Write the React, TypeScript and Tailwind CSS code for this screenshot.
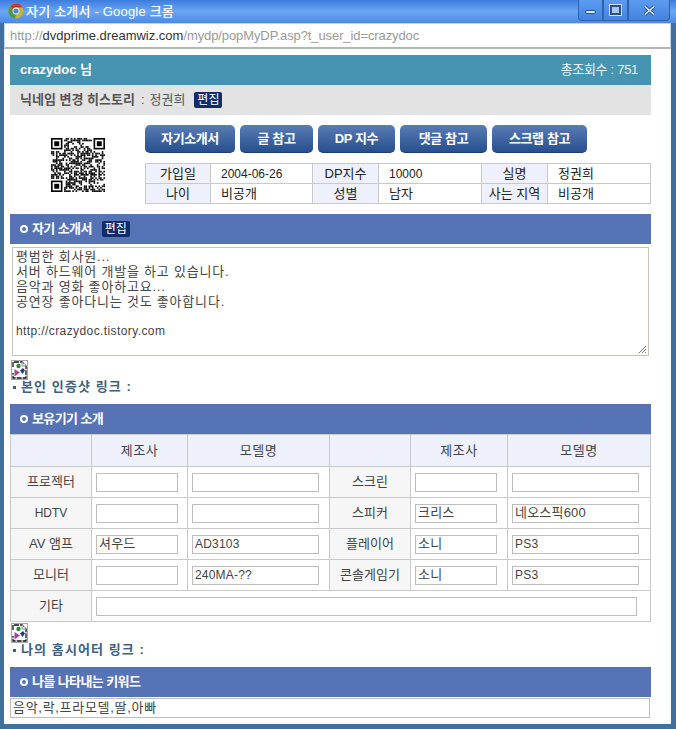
import React from "react";

const KR = "font-['Liberation_Sans','Noto_Sans_CJK_KR',sans-serif]";

const sizeFor = (text?: string) => (text && /^[\x00-\x7f]+$/.test(text) ? "text-[12px]" : "text-[13px]");

// pseudo random qr modules, with the three finder squares
const QR_SIZE = 33;
const qrCells = () => {
  const cells: [number, number][] = [];
  let seed = 12345;
  const inFinder = (x: number, y: number) =>
    (x < 8 && y < 8) || (x >= QR_SIZE - 8 && y < 8) || (x < 8 && y >= QR_SIZE - 8);
  for (let y = 0; y < QR_SIZE; y++) {
    for (let x = 0; x < QR_SIZE; x++) {
      seed = (seed * 1103515245 + 12345) & 0x7fffffff;
      if (!inFinder(x, y) && (seed >> 16) % 100 < 52) cells.push([x, y]);
    }
  }
  return cells;
};

const Finder = ({ x, y }: { x: number; y: number }) => (
  <>
    <rect x={x} y={y} width="7" height="7" fill="#000" />
    <rect x={x + 1} y={y + 1} width="5" height="5" fill="#fff" />
    <rect x={x + 2} y={y + 2} width="3" height="3" fill="#000" />
  </>
);

const QrCode = () => (
  <svg width="54" height="54" viewBox="0 0 33 33">
    {qrCells().map(([x, y]) => (
      <rect key={`${x}-${y}`} x={x} y={y} width="1" height="1" fill="#000" />
    ))}
    <Finder x={0} y={0} />
    <Finder x={26} y={0} />
    <Finder x={0} y={26} />
  </svg>
);

const ChromeIcon = () => (
  <svg width="16" height="16" viewBox="0 0 16 16">
    <circle cx="8" cy="8" r="7.5" fill="#c9b13a" />
    <path d="M8 .5A7.5 7.5 0 0 1 14.6 4.5H8A3.6 3.6 0 0 0 4.6 6.9L2.4 3A7.5 7.5 0 0 1 8 .5Z" fill="#c8372f" />
    <path d="M2.4 3 5.3 8.9A3.6 3.6 0 0 0 8.6 11.5L6.6 15.4A7.5 7.5 0 0 1 2.4 3Z" fill="#4f9a45" />
    <circle cx="8" cy="8" r="3.4" fill="#fff" />
    <circle cx="8" cy="8" r="2.6" fill="#4a86d8" />
  </svg>
);

const BrokenImage = () => (
  <div className="w-[17px] h-[20px] border border-[#a8a8a8] bg-white flex items-center justify-center">
    <svg width="15" height="18" viewBox="0 0 15 18">
      <path d="M1 6V1H10L14 5V17H1V12" fill="#fff" stroke="#111" strokeWidth="1.3" strokeDasharray="5 1" />
      <path d="M10 1V5H14" fill="#dfe8d8" stroke="#999" strokeWidth="1" />
      <circle cx="6.5" cy="5" r="2.2" fill="#2d8a3c" />
      <path d="M2.5 8 8 11.5 2.5 15.5Z" fill="#b5408c" />
      <path d="M8 9.5 11 7 13 9.5 10.5 13Z" fill="#1c3a9a" />
    </svg>
  </div>
);

const CaptionButton = ({ kind }: { kind: "min" | "max" | "close" }) => (
  <div
    className={`h-[21px] flex items-center justify-center border border-t-0 border-[#2f62ad] bg-gradient-to-b from-[#5b9bef] to-[#4583de] ${
      kind === "close" ? "w-[42px] rounded-br-[4px]" : kind === "min" ? "w-[25px] rounded-bl-[4px]" : "w-[25px]"
    }`}
  >
    {kind === "min" && <div className="w-[11px] h-[4px] mt-[3px] rounded-[2px] bg-[#d8e6f8] border border-[#2a4f8c]" />}
    {kind === "max" && <div className="w-[11px] h-[10px] border-2 border-[#2a4f8c] bg-[#a9c8f0] outline outline-1 outline-[#cfe0f6]" />}
    {kind === "close" && (
      <svg width="13" height="11" viewBox="0 0 13 11">
        <path d="M2 1.5 11 9.5M11 1.5 2 9.5" stroke="#2a4f8c" strokeWidth="3.4" />
        <path d="M2 1.5 11 9.5M11 1.5 2 9.5" stroke="#e4ecf8" strokeWidth="1.6" />
      </svg>
    )}
  </div>
);

const EditBadge = () => (
  <span className="inline-flex items-center justify-center w-[28px] h-[16px] bg-[#0f2c6c] text-white text-[12px] rounded-[2px]">
    편집
  </span>
);

const SectionBar = ({ title, badge }: { title: string; badge?: boolean }) => (
  <div className="h-[30px] bg-[#5573b5] flex items-center pl-[10px] gap-[10px]">
    <div className="flex items-center gap-[4px]">
      <span className="w-[8px] h-[8px] rounded-full border-2 border-white" />
      <span className="text-white text-[13px] font-bold tracking-[-0.6px]">{title}</span>
    </div>
    {badge && <EditBadge />}
  </div>
);

const NavButton = ({ label, w }: { label: string; w: string }) => (
  <button
    className={`${w} h-[28px] rounded-[5px] bg-gradient-to-b from-[#5a7cb4] to-[#274f8f] border-b border-[#1d3c70] text-white text-[13px] font-bold tracking-[-0.4px]`}
  >
    {label}
  </button>
);

const InfoGroup = ({ w, labelW, label, value }: { w: string; labelW: string; label: string; value: string }) => (
  <div className={`${w} flex border-r last:border-r-0 border-[#c9c9c9]`}>
    <div className={`${labelW} shrink-0 bg-[#eef0fb] border-r border-[#c9c9c9] flex items-center justify-center text-[13px] text-[#222]`}>
      {label}
    </div>
    <div className={`grow flex items-center pl-[10px] ${sizeFor(value)} text-[#222]`}>{value}</div>
  </div>
);

const InfoRow = ({ cells, first }: { cells: [string, string][]; first?: boolean }) => (
  <div className={`flex ${first ? "h-[19px]" : "h-[20px] border-t border-[#c9c9c9]"}`}>
    <InfoGroup w="w-[167px]" labelW="w-[65px]" label={cells[0][0]} value={cells[0][1]} />
    <InfoGroup w="w-[169px]" labelW="w-[66px]" label={cells[1][0]} value={cells[1][1]} />
    <InfoGroup w="grow" labelW="w-[66px]" label={cells[2][0]} value={cells[2][1]} />
  </div>
);

const FieldBox = ({ w, value }: { w: string; value?: string }) => (
  <div className={`${w} h-[19px] border border-[#bdbdbd] bg-white flex items-center pl-[2px] ${sizeFor(value)} text-[#444] tracking-[0.2px] whitespace-nowrap overflow-hidden`}>
    {value}
  </div>
);

const GearLabel = ({ text }: { text: string }) => (
  <div className={`w-[81px] shrink-0 bg-[#f6f6f6] border-r border-[#c9c9c9] flex items-center justify-center ${sizeFor(text)} text-[#444]`}>
    {text}
  </div>
);

const GearCols = ({ label, maker, model, makerW }: { label: string; maker?: string; model?: string; makerW: string }) => (
  <>
    <GearLabel text={label} />
    <div className={`${makerW} shrink-0 border-r border-[#c9c9c9] flex items-center pl-[4px]`}>
      <FieldBox w="w-[82px]" value={maker} />
    </div>
    <div className="w-[142px] shrink-0 border-r last:border-r-0 border-[#c9c9c9] flex items-center pl-[4px]">
      <FieldBox w="w-[127px]" value={model} />
    </div>
  </>
);

const gearRows = [
  { l: "프로젝터", r: "스크린" },
  { l: "HDTV", r: "스피커", rMaker: "크리스", rModel: "네오스픽600" },
  { l: "AV 앰프", lMaker: "셔우드", lModel: "AD3103", r: "플레이어", rMaker: "소니", rModel: "PS3" },
  { l: "모니터", lModel: "240MA-??", r: "콘솔게임기", rMaker: "소니", rModel: "PS3" },
];

const HeadCols = ({ makerW }: { makerW: string }) => (
  <>
    <div className="w-[81px] shrink-0 border-r border-[#c9c9c9]" />
    <div className={`${makerW} shrink-0 border-r border-[#c9c9c9] flex items-center justify-center`}>제조사</div>
    <div className="w-[142px] shrink-0 border-r last:border-r-0 border-[#c9c9c9] flex items-center justify-center">모델명</div>
  </>
);

const GearTable = () => (
  <div className="border border-[#c9c9c9]">
    <div className="flex h-[31px] bg-[#eef0fb] text-[13px] text-[#444] tracking-[0.5px]">
      <HeadCols makerW="w-[96px]" />
      <HeadCols makerW="w-[97px]" />
    </div>
    {gearRows.map((row) => (
      <div key={row.l} className="flex h-[31px] border-t border-[#c9c9c9]">
        <GearCols label={row.l} maker={row.lMaker} model={row.lModel} makerW="w-[96px]" />
        <GearCols label={row.r} maker={row.rMaker} model={row.rModel} makerW="w-[97px]" />
      </div>
    ))}
    <div className="flex h-[31px] border-t border-[#c9c9c9]">
      <GearLabel text="기타" />
      <div className="grow flex items-center pl-[4px]">
        <FieldBox w="w-[541px]" />
      </div>
    </div>
  </div>
);

const LinkLabel = ({ text }: { text: string }) => (
  <div className="mt-[1px] h-[12px] flex items-center gap-[5px] pl-[3px] text-[13px] font-bold text-[#41607f] tracking-[1.1px]">
    <span className="w-[3px] h-[3px] bg-[#41607f]" />
    {text}
  </div>
);

export default function App() {
  return (
    <div className={`${KR} w-[676px] h-[729px] overflow-hidden flex flex-col bg-[#3f6eaa]`}>
      {/* title bar */}
      <div className="h-[23px] shrink-0 flex items-start justify-between bg-gradient-to-b from-[#3d7ce0] via-[#6aa6f2] to-[#4a8ae6] pl-[8px] pr-[6px]">
        <div className="flex items-center gap-[2px] h-[22px]">
          <ChromeIcon />
          <span className="text-white text-[13px] font-medium tracking-[0.2px] leading-none">자기 소개서 - Google 크롬</span>
        </div>
        <div className="flex">
          <CaptionButton kind="min" />
          <CaptionButton kind="max" />
          <CaptionButton kind="close" />
        </div>
      </div>

      <div className="grow min-h-0 border-l-[4px] border-r-[5px] border-b-[5px] border-[#41709f] bg-white flex flex-col">
        {/* address bar */}
        <div className="h-[26px] shrink-0 flex items-center bg-white border border-[#c5d5ea] border-b-[#b4b4b4] border-b-2 pl-[5px] text-[13px] text-[#9a9a9a]">
          http://<span className="text-[#333]">dvdprime.dreamwiz.com</span>
          <span className="tracking-[-0.1px]">/mydp/popMyDP.asp?t_user_id=crazydoc</span>
        </div>

        <div className="pl-[6px] pr-[20px] pt-[6px] flex flex-col">
          {/* header */}
          <div className="h-[30px] bg-[#4694af] flex items-center justify-between pl-[10px] pr-[13px] text-white">
            <span className="text-[13px] font-bold">crazydoc 님</span>
            <span className="text-[13px] tracking-[-0.3px] text-[#e8f2f5]">총조회수 : 751</span>
          </div>
          <div className="h-[30px] bg-[#e3e3e3] flex items-center pl-[10px] text-[13px] text-[#555]">
            <span className="font-bold">닉네임 변경 히스토리</span>
            <span className="ml-[6px]">:</span>
            <span className="ml-[5px]">정권희</span>
            <span className="ml-[9px] flex"><EditBadge /></span>
          </div>

          {/* profile */}
          <div className="flex mt-[10px] h-[79px]">
            <div className="w-[135px] shrink-0 flex justify-center pt-[13px]">
              <QrCode />
            </div>
            <div className="grow flex flex-col">
              <div className="flex gap-[5px]">
                <NavButton label="자기소개서" w="w-[90px]" />
                <NavButton label="글 참고" w="w-[73px]" />
                <NavButton label="DP 지수" w="w-[77px]" />
                <NavButton label="댓글 참고" w="w-[87px]" />
                <NavButton label="스크랩 참고" w="w-[95px]" />
              </div>
              <div className="mt-[10px] h-[41px] border border-[#c9c9c9]">
                <InfoRow first cells={[["가입일", "2004-06-26"], ["DP지수", "10000"], ["실명", "정권희"]]} />
                <InfoRow cells={[["나이", "비공개"], ["성별", "남자"], ["사는 지역", "비공개"]]} />
              </div>
            </div>
          </div>

          <div className="mt-[10px]">
            <SectionBar title="자기 소개서" badge />
          </div>
          <div className="ml-[2px] mr-[2px] mt-[3px] h-[109px] border border-[#c9c5b5] pl-[3px] pt-[1px] text-[13px] leading-[15px] text-[#444] tracking-[0.8px] relative">
            <div>평범한 회사원...</div>
            <div>서버 하드웨어 개발을 하고 있습니다.</div>
            <div>음악과 영화 좋아하고요...</div>
            <div>공연장 좋아다니는 것도 좋아합니다.</div>
            <div className="h-[15px]" />
            <div className="text-[12px] tracking-[0.4px]">http://crazydoc.tistory.com</div>
            <svg className="absolute right-[1px] bottom-[1px]" width="9" height="9" viewBox="0 0 9 9">
              <path d="M8 1 1 8M8 4 4 8M8 7 7 8" stroke="#777" strokeWidth="1" />
            </svg>
          </div>
          <div className="mt-[4px] ml-[1px]"><BrokenImage /></div>
          <LinkLabel text="본인 인증샷 링크 :" />

          <div className="mt-[11px]">
            <SectionBar title="보유기기 소개" />
          </div>
          <GearTable />

          <div className="mt-[1px] ml-[1px]"><BrokenImage /></div>
          <LinkLabel text="나의 홈시어터 링크 :" />

          <div className="mt-[11px]">
            <SectionBar title="나를 나타내는 키워드" />
          </div>
          <div className="mt-[1px] mr-[1px] h-[20px] border border-[#bdbdbd] flex items-center pl-[2px] text-[13px] text-[#444] tracking-[0.7px]">
            음악,락,프라모델,딸,아빠
          </div>
        </div>
      </div>
    </div>
  );
}
